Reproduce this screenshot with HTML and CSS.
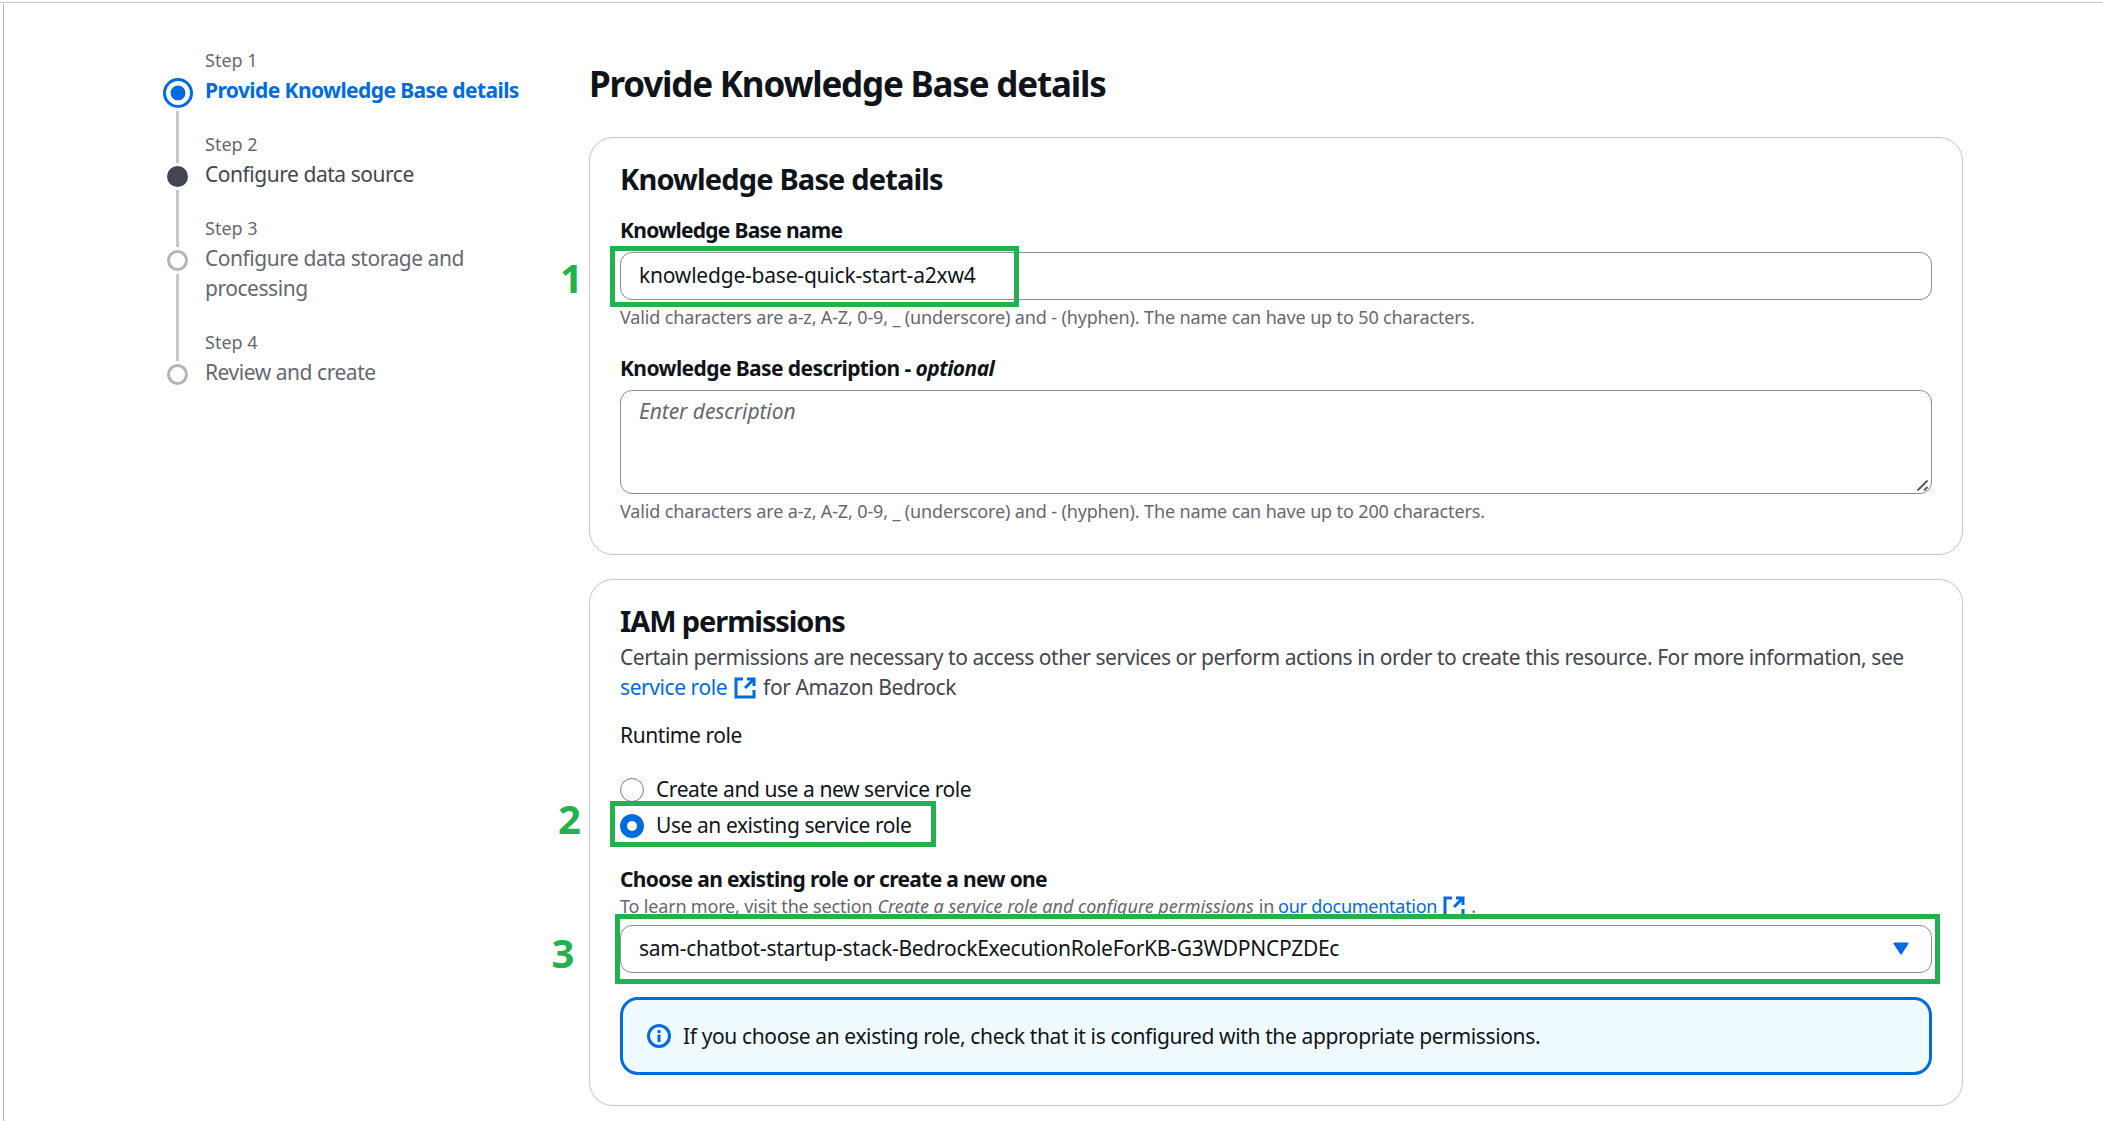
FILE: index.html
```html
<!DOCTYPE html>
<html lang="en">
<head>
<meta charset="utf-8">
<title>Provide Knowledge Base details</title>
<link rel="stylesheet" href="styles.css">
</head>
<body>
<div class="app">
  <nav class="steps">
    <div class="step step-active">
      <div class="rail"><span class="dot"></span><span class="line"></span></div>
      <div class="step-text"><div class="step-label">Step 1</div><div class="step-name">Provide Knowledge Base details</div></div>
    </div>
    <div class="step step-next">
      <div class="rail"><span class="dot"></span><span class="line"></span></div>
      <div class="step-text"><div class="step-label">Step 2</div><div class="step-name">Configure data source</div></div>
    </div>
    <div class="step">
      <div class="rail"><span class="dot"></span><span class="line"></span></div>
      <div class="step-text"><div class="step-label">Step 3</div><div class="step-name">Configure data storage and<br>processing</div></div>
    </div>
    <div class="step">
      <div class="rail"><span class="dot"></span></div>
      <div class="step-text"><div class="step-label">Step 4</div><div class="step-name">Review and create</div></div>
    </div>
  </nav>
  <main class="content">
    <h1>Provide Knowledge Base details</h1>
    <section class="card">
      <h2>Knowledge Base details</h2>
      <div class="label label-name">Knowledge Base name</div>
      <div class="anchor">
        <div class="input"><span class="t-input">knowledge-base-quick-start-a2xw4</span></div>
        <span class="mark mark-1"></span><span class="num num-1">1</span>
      </div>
      <div class="hint">Valid characters are a-z, A-Z, 0-9, _ (underscore) and - (hyphen). The name can have up to 50 characters.</div>
      <div class="label label-desc">Knowledge Base description - <i>optional</i></div>
      <div class="textarea"><span class="placeholder">Enter description</span>
        <svg class="grip" viewBox="0 0 14 14"><path d="M1.500 11.500 11.500 1.500M8 11.500 11.500 8" /></svg>
      </div>
      <div class="hint">Valid characters are a-z, A-Z, 0-9, _ (underscore) and - (hyphen). The name can have up to 200 characters.</div>
    </section>
    <section class="card">
      <h2 class="h2-iam">IAM permissions</h2>
      <p class="desc"><span class="t-desc">Certain permissions are necessary to access other services or perform actions in order to create this resource. For more information, see</span><br><span class="desc-row"><a class="t-link">service role</a><svg class="ext" viewBox="0 0 24 24"><path d="M10 3H3v18h18v-7M14 3h7v7M21 3l-9 9"/></svg><span class="t-for">for Amazon Bedrock</span></span></p>
      <div class="runtime">Runtime role</div>
      <div class="radio radio-first"><span class="circle"></span><span class="t-r1">Create and use a new service role</span></div>
      <div class="radio anchor"><span class="circle checked"></span><span class="t-r2">Use an existing service role</span>
        <span class="mark mark-2"></span><span class="num num-2">2</span>
      </div>
      <div class="label label-role">Choose an existing role or create a new one</div>
      <div class="help"><span class="t-h1">To learn more, visit the section</span><i class="t-h2">Create a service role and configure permissions</i><span class="t-h3">in</span><a class="t-h4">our documentation</a><svg class="ext" viewBox="0 0 24 24"><path d="M10 3H3v18h18v-7M14 3h7v7M21 3l-9 9"/></svg><span class="t-dot">.</span></div>
      <div class="anchor">
        <div class="input select"><span class="t-select">sam-chatbot-startup-stack-BedrockExecutionRoleForKB-G3WDPNCPZDEc</span>
          <svg class="caret" viewBox="0 0 16 13"><path d="M1.500 1.500h13L8 11.500z"/></svg>
        </div>
        <span class="mark mark-3"></span><span class="num num-3">3</span>
      </div>
      <div class="alert">
        <svg class="info" viewBox="0 0 24 24"><circle cx="12" cy="12" r="10.500"/><path d="M12 10.500V18M12 6v3"/></svg>
        <span class="t-alert">If you choose an existing role, check that it is configured with the appropriate permissions.</span>
      </div>
    </section>
  </main>
</div>
</body>
</html>
```
FILE: styles.css
```css
* { box-sizing: border-box; }
body {
  margin: 0;
  padding: 2px 0 0;
  background: #fff;
  color: #0f141a;
  font-family: "Noto Sans", "Open Sans", sans-serif;
  font-size: 21px;
  line-height: 30px;
  letter-spacing: -0.430px;
  white-space: nowrap;
  overflow: hidden;
}
.app {
  display: flex;
  height: 1119px;
  border-top: 1px solid #c6c6cd;
  padding-left: 3px;
  background: linear-gradient(#b4b4bb, #b4b4bb) 3px 1px / 1px 100% no-repeat;
}
.steps { width: 586px; padding: 45px 0 0 159px; color: #656871; flex: none; }
.step { display: flex; gap: 12px; margin-bottom: 27px; }
.rail { width: 31px; padding-top: 34px; display: flex; flex-direction: column; align-items: center; }
.dot { width: 21px; height: 21px; flex: none; border: 3px solid #b4b4bb; border-radius: 50%; }
.line { width: 3px; flex: 1; background: #c6c6cd; margin: 3px 0 -58px; }
.step-active .rail { padding-top: 29.5px; }
.step-active .dot { width: 30px; height: 30px; border-color: #006ce0; background: radial-gradient(circle, #006ce0 7px, #fff 7.800px); }
.step-name { letter-spacing: -0.460px; }
.step-active .step-name { color: #006ce0; font-weight: 700; letter-spacing: -0.590px; }
.step-next .dot { background: #424650; border-color: #424650; }
.step-next .step-name { color: #424650; }
.step-label { font-size: 18px; line-height: 24px; margin-bottom: 3px; letter-spacing: 0; }

.content { width: 1374px; padding-top: 58px; }
h1, h2, p { margin: 0; }
h1 { font-size: 35px; line-height: 45px; margin-bottom: 31px; font-weight: 700; letter-spacing: -1.200px; }
h2 { font-size: 29px; line-height: 36px; font-weight: 700; padding-top: 1px; height: 36px; letter-spacing: -0.850px; }
.h2-iam { letter-spacing: -1.100px; }
.card { border: 1px solid #c6c6cd; border-radius: 24px; padding: 22px 30px 31px; margin-bottom: 24px; }
.card + .card { padding-bottom: 30px; }
.label { font-weight: 700; }
.label-name { margin: 19px 0 7px; letter-spacing: -0.720px; }
.label-desc { margin: 24px 0 7px; letter-spacing: -0.590px; }
.label-role { margin-top: 24px; letter-spacing: -0.660px; }
.anchor { position: relative; }
.input { height: 48px; border: 1px solid #8c8c94; border-radius: 12px; padding: 0 18px 2px; display: flex; align-items: center; }
.t-input { letter-spacing: -0.210px; }
.select { justify-content: space-between; padding-right: 22px; }
.t-select { letter-spacing: -0.270px; }
.textarea { height: 104px; border: 1px solid #8c8c94; border-radius: 12px; padding: 5px 18px; position: relative; }
.placeholder { color: #656871; font-style: italic; letter-spacing: -0.070px; }
.hint { margin-top: 5px; font-size: 18px; line-height: 24px; color: #656871; letter-spacing: -0.140px; }
.grip { position: absolute; right: 1px; bottom: 0; width: 14px; height: 14px; fill: none; stroke: #55555c; stroke-width: 1.800; }
.desc { margin-top: 4px; color: #424650; }
.t-desc { letter-spacing: -0.440px; }
.desc-row { display: flex; }
a { color: #006ce0; }
.ext { width: 24px; height: 24px; fill: none; stroke: #006ce0; stroke-width: 3; flex: none; margin: 4px 6px 0; }
.runtime { margin: 18px 0 24px; }
.radio { display: flex; align-items: center; gap: 12px; height: 30px; }
.radio-first { margin-bottom: 6px; }
.circle { width: 24px; height: 24px; border: 1px solid #7d7d86; border-radius: 50%; margin-top: 1px; }
.checked { border: 7px solid #006ce0; }
.help { display: flex; font-size: 18px; line-height: 24px; height: 24px; color: #656871; margin-bottom: 7px; letter-spacing: 0; }
.help .ext { margin: 1px 5px 0; }
.t-h1 { letter-spacing: -0.180px; }
.t-h2 { margin: 0 5px; letter-spacing: -0.010px; }
.t-h3 { margin-right: 4px; letter-spacing: -0.200px; }
.t-h4 { letter-spacing: -0.270px; }
.caret { width: 16px; height: 13px; margin-top: 1px; fill: #006ce0; stroke: #006ce0; stroke-width: 2; stroke-linejoin: round; }
.alert { margin-top: 24px; height: 78px; border: 3px solid #006ce0; border-radius: 18px; background: #f0fbff; display: flex; align-items: center; gap: 12px; padding-left: 24px; }
.t-alert { letter-spacing: -0.375px; }
.info { width: 24px; height: 24px; fill: none; stroke: #006ce0; stroke-width: 3; }

/* tutorial call-outs drawn over the form */
.mark { position: absolute; border: 5px solid #22b14c; }
.mark-1 { left: -10px; top: -6px; width: 409px; height: 61px; }
.mark-2 { left: -10px; top: -9px; width: 326px; height: 46px; }
.mark-3 { left: -5px; top: -11px; width: 1325px; height: 70px; }
.num { position: absolute; color: #22b14c; font: 700 40px/48px "Open Sans", "Noto Sans", sans-serif; letter-spacing: 0; }
.num-1 { left: -60px; top: 2px; }
.num-2 { left: -62px; top: -15px; }
.num-3 { left: -68.500px; top: 4px; }
```
